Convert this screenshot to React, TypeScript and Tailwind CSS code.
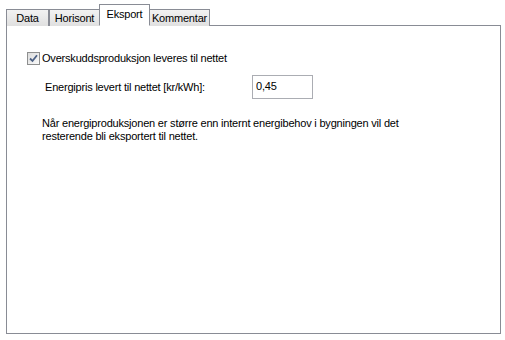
import React, { useState } from 'react';

const tabs = ['Data', 'Horisont', 'Eksport', 'Kommentar'];
const tabWidths: Record<string, string> = {
  Data: 'w-[43px]',
  Horisont: 'w-[51px]',
  Eksport: 'w-[51px]',
  Kommentar: 'w-[61px]',
};

const App: React.FC = () => {
  const [active, setActive] = useState('Eksport');
  const [checked, setChecked] = useState(true);
  const [price, setPrice] = useState('0,45');

  return (
    <div
      className="w-[505px] h-[340px] bg-white text-[11px] tracking-[-0.2px] text-black overflow-hidden"
      style={{ fontFamily: '"Liberation Sans", Arial, sans-serif' }}
    >
      <div className="pt-[5px] pl-[6px]">
        {/* tab strip */}
        <div className="relative z-10 flex items-end h-[21px] -mb-px">
          {tabs.map((t) => {
            const sel = t === active;
            return (
              <button
                key={t}
                onClick={() => setActive(t)}
                className={`${tabWidths[t]} flex justify-center border border-[#898c95] leading-none ${
                  sel
                    ? 'h-[22px] bg-white border-b-white pt-[4px] -mx-px relative z-10'
                    : 'h-[17px] bg-gradient-to-b from-[#f2f2f2] to-[#e0e0e0] border-b-0 pt-[3px]'
                }`}
              >
                {t}
              </button>
            );
          })}
        </div>

        {/* panel */}
        <div className="w-[495px] h-[309px] border border-[#898c95] bg-white pl-[20px] pt-[25px]">
          <label className="flex items-center h-[14px] cursor-default">
            <span
              onClick={() => setChecked(!checked)}
              className="w-[13px] h-[13px] border border-[#8e8f8f] bg-gradient-to-br from-[#dcdcdc] to-[#fafafa] flex items-center justify-center"
            >
              {checked && (
                <svg width="9" height="9" viewBox="0 0 9 9">
                  <path d="M1 4.5 L3.5 7 L8 1.2" fill="none" stroke="#4d6185" strokeWidth="1.8" />
                </svg>
              )}
            </span>
            <span className="ml-[2px]">Overskuddsproduksjon leveres til nettet</span>
          </label>

          <div className="flex items-center mt-[10px] ml-[18px]">
            <span className="w-[207px]">Energipris levert til nettet [kr/kWh]:</span>
            <input
              value={price}
              onChange={(e) => setPrice(e.target.value)}
              className="w-[61px] h-[24px] border border-[#abadb3] px-[3px] pb-[2px] outline-none text-[11px]"
              style={{ fontFamily: '"Liberation Sans", Arial, sans-serif' }}
            />
          </div>

          <p className="mt-[18px] ml-[15px] leading-[13px] whitespace-nowrap">
            Når energiproduksjonen er større enn internt energibehov i bygningen vil det
            <br />
            resterende bli eksportert til nettet.
          </p>
        </div>
      </div>
    </div>
  );
};

export default App;
